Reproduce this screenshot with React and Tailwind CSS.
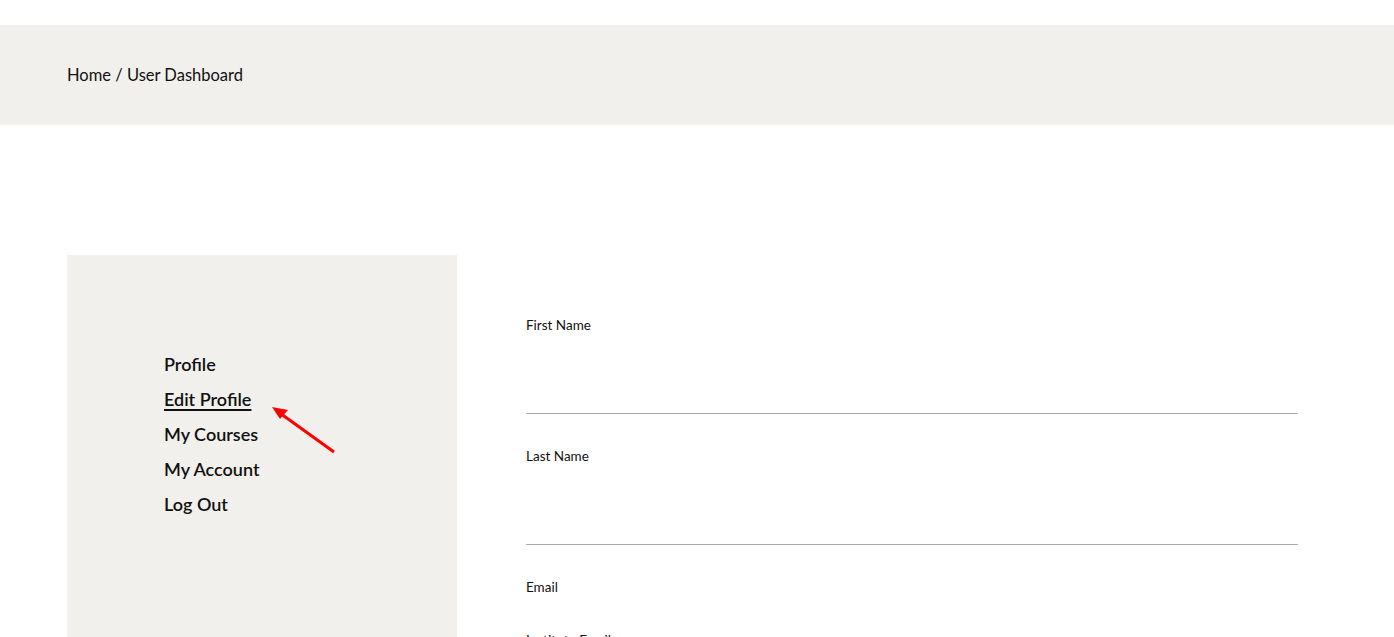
import React from "react";

const navItems = ["Profile", "Edit Profile", "My Courses", "My Account", "Log Out"];
const fields = ["First Name", "Last Name", "Email", "Institute Email"];

const App = () => {
  return (
    <div
      className="min-h-screen bg-white text-[#111] overflow-hidden h-[637px]"
      style={{ fontFamily: "Lato, 'Noto Sans', sans-serif" }}
    >
      {/* Breadcrumb */}
      <div className="mt-[25px] h-[100px] bg-[#f1f0ec] flex items-center px-[67px]">
        <p className="text-[16.5px] text-[#111]">Home / User Dashboard</p>
      </div>

      {/* Content */}
      <div className="flex pt-[130px] pl-[67px]">
        {/* Sidebar */}
        <div className="relative w-[390px] h-[400px] bg-[#f1f0ec] pt-[97px] pl-[97px]">
          <ul className="flex flex-col">
            {navItems.map((item) => (
              <li
                key={item}
                className={`h-[35px] leading-[24px] text-[18px] font-semibold text-[#111] ${
                  item === "Edit Profile" ? "underline underline-offset-[3px] decoration-[1.5px]" : ""
                }`}
              >
                {item}
              </li>
            ))}
          </ul>

          {/* annotation arrow */}
          <svg
            className="absolute left-[200px] top-[145px]"
            width="80"
            height="60"
            viewBox="0 0 80 60"
          >
            <line x1="67" y1="52" x2="10" y2="11" stroke="#ff0000" strokeWidth="3" />
            <polygon points="5,7 21,10 13,19" fill="#ff0000" />
          </svg>
        </div>

        {/* Form */}
        <div className="ml-[69px] w-[772px] pt-[63px]">
          {fields.map((f, i) => (
            <div key={f} className={i < 2 ? "h-[131px]" : "h-[53px]"}>
              <label className="block text-[13.5px] leading-[14px] text-[#111]">{f}</label>
              {i < 2 && <div className="mt-[81px] h-px bg-[#a8a8a8]" />}
            </div>
          ))}
        </div>
      </div>
    </div>
  );
};

export default App;
